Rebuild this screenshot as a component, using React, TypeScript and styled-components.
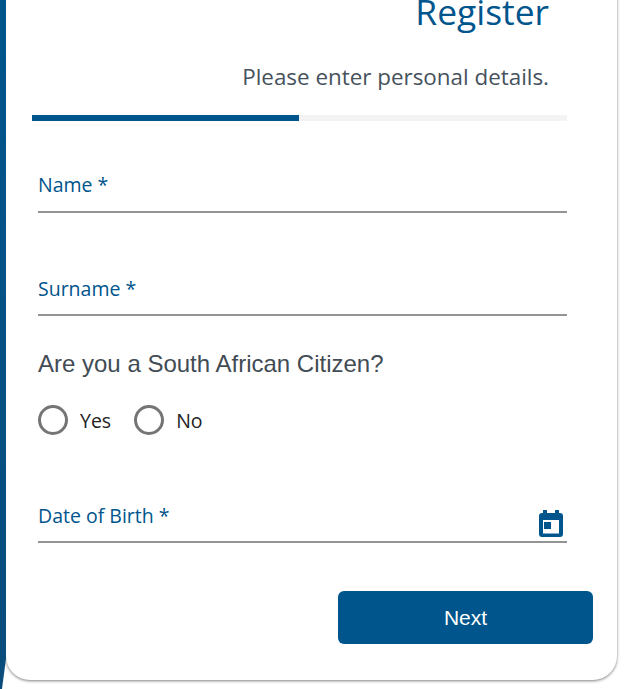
import React from "react";
import styled, { createGlobalStyle } from "styled-components";

const Global = createGlobalStyle`
  html, body { margin: 0; padding: 0; background: #fff; height: 100%; overflow: hidden; }
  #root { height: 689px; overflow: hidden; }
`;
const Page = styled.div`
  display: flex; align-items: flex-start; width: 636px; height: 689px; overflow: hidden; background: #fff;
`;
const Stripe = styled.div`
  flex: 0 0 6px; height: 689px;
  background: linear-gradient(180deg, #00558c 0%, #0a4c7c 100%);
  clip-path: polygon(0 0, 100% 0, 100% 95.6%, 33% 100%, 0 100%);
`;
const Card = styled.main`
  flex: 0 0 611px; box-sizing: border-box; height: 720px; margin-top: -40px; padding: 0 24px 0 26px;
  background: #fff; border-radius: 0 0 24px 24px;
  box-shadow: 0 1px 3px rgba(0,0,0,.5);
  font-family: "Open Sans", "Noto Sans", sans-serif;
`;
const Title = styled.h1`
  margin: 0; padding: 28px 44px 0 0; text-align: right; font-size: 35.4px; line-height: 46px; font-weight: 400; color: #00558c;
`;
const Sub = styled.p`
  margin: 28px 44px 0 0; text-align: right; font-size: 22.4px; line-height: 30px; color: #46525c;
`;
const Progress = styled.div`
  margin: 23px 26px 0 0; height: 6px; background: #f3f3f3;
`;
const Fill = styled.div`
  height: 100%; background: #00558c;
`;
const Form = styled.form`
  display: flex; flex-direction: column; padding: 0 26px 0 6px;
`;
const Field = styled.div<{ $h: number }>`
  position: relative; box-sizing: border-box; height: ${p => p.$h}px; border-bottom: 2px solid #949494;
  display: flex; align-items: flex-end; justify-content: space-between;
`;
const Label = styled.label<{ $gap: number }>`
  font-size: 19.5px; line-height: 27px; color: #00558c; padding-bottom: ${p => p.$gap}px;
`;
const Question = styled.div`
  margin-top: 33px; font-family: "Liberation Sans", Arial, sans-serif; font-size: 24px; line-height: 30px; color: #424c54;
`;
const Radios = styled.div`
  display: flex; align-items: center; margin-top: 26px;
`;
const RadioItem = styled.label`
  display: flex; align-items: center; margin-right: 23px; font-size: 19.5px; color: #222;
`;
const Circle = styled.span`
  box-sizing: border-box; width: 30px; height: 30px; border: 3px solid #757575; border-radius: 50%; margin-right: 12px;
`;
const Actions = styled.div`
  display: flex; justify-content: flex-end; margin-top: 48px; margin-right: -26px;
`;
const Next = styled.button`
  width: 255px; height: 53px; border: 0; border-radius: 6px; background: #00558c; color: #fff;
  font-family: "Liberation Sans", Arial, sans-serif; font-size: 21px; font-weight: 400;
`;
const Cal = styled.svg`
  width: 24px; height: 27px; margin: 0 4px 4px 0; display: block;
`;

export default function App() {
  return (
    <Page>
      <Global />
      <Stripe />
      <Card>
        <Title>Register</Title>
        <Sub>Please enter personal details.</Sub>
        <Progress><Fill style={{ width: "49.9%" }} /></Progress>
        <Form>
          <Field $h={92}><Label $gap={13}>Name *</Label></Field>
          <Field $h={103}><Label $gap={12}>Surname *</Label></Field>
          <Question>Are you a South African Citizen?</Question>
          <Radios>
            <RadioItem><Circle />Yes</RadioItem>
            <RadioItem><Circle />No</RadioItem>
          </Radios>
          <Field $h={108}>
            <Label $gap={12}>Date of Birth *</Label>
            <Cal viewBox="0 0 24 27" aria-hidden="true">
              <path fill="#00558c" d="M4 0h4v3h8V0h4v3h1a3 3 0 0 1 3 3v18a3 3 0 0 1-3 3H3a3 3 0 0 1-3-3V6a3 3 0 0 1 3-3h1z" />
              <rect x="4" y="10" width="16" height="13.5" fill="#fff" />
              <rect x="5" y="12" width="7" height="7" fill="#00558c" />
            </Cal>
          </Field>
          <Actions><Next type="button">Next</Next></Actions>
        </Form>
      </Card>
    </Page>
  );
}
